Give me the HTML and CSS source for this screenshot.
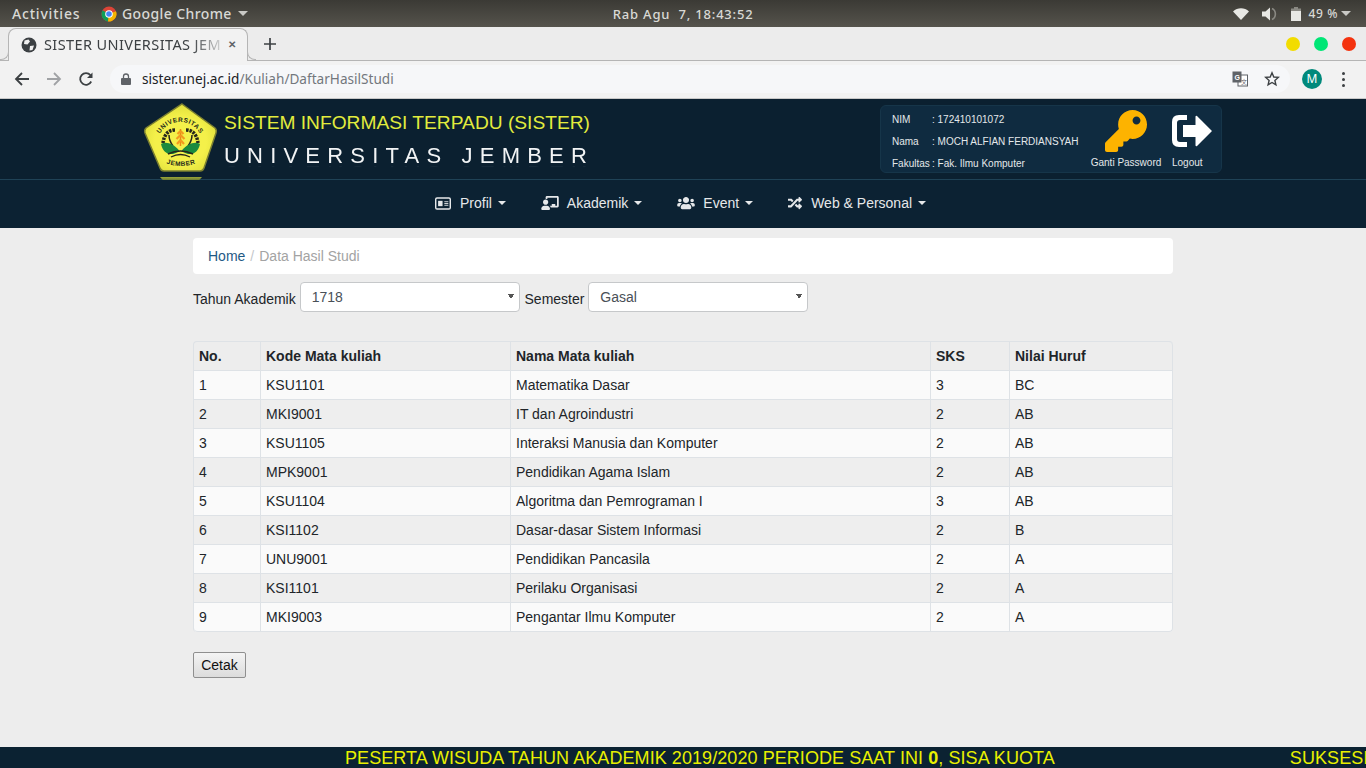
FILE: index.html
```html
<!DOCTYPE html>
<html lang="en">
<head>
  <meta charset="UTF-8">
  <meta name="viewport" content="width=device-width, initial-scale=1.0">
  <title>SISTER Universitas Jember</title>
  <link rel="stylesheet" href="styles.css">
</head>
<body>
  <!-- desktop top bar -->
  <div class="os-bar">
    <span class="os-activities">Activities</span>
    <svg class="os-chrome" viewBox="0 0 16 16" width="16" height="16">
      <circle cx="8" cy="8" r="7.5" fill="#db4437"/>
      <path d="M8 8 L1.5 4.2 A7.5 7.5 0 0 0 7 15.4 Z" fill="#0f9d58"/>
      <path d="M8 8 L15 5.2 A7.5 7.5 0 0 1 7 15.4 Z" fill="#f4b400"/>
      <circle cx="8" cy="8" r="3.8" fill="#fff"/>
      <circle cx="8" cy="8" r="2.8" fill="#4285f4"/>
    </svg>
    <span class="os-app">Google Chrome</span>
    <span class="os-caret"></span>
    <span class="os-clock">Rab Agu &nbsp;7, 18:43:52</span>
    <div class="os-tray">
      <svg viewBox="0 0 16 12" width="16" height="12"><path d="M0 3.5 C4.5 -.8 11.5 -.8 16 3.5 L8 12 Z" fill="#e8e8e4"/></svg>
      <svg viewBox="0 0 16 14" width="16" height="14"><path d="M0 4.5 H3.5 L8 .5 V13.5 L3.5 9.5 H0 Z" fill="#e8e8e4"/><path d="M10 1.5 C14.5 3.5 14.5 10.5 10 12.5" fill="none" stroke="#8a8983" stroke-width="1.6"/></svg>
      <svg viewBox="0 0 10 14" width="10" height="14"><path d="M3 0 H7 V1.5 H10 V14 H0 V1.5 H3 Z" fill="#8a8983"/><rect y="4" width="10" height="10" fill="#e8e8e4"/></svg>
      <span class="os-battery">49 %</span>
      <span class="os-caret"></span>
    </div>
  </div>

  <!-- browser tabs -->
  <div class="tab-strip">
    <div class="tab">
      <svg viewBox="0 0 16 16" width="16" height="16">
        <circle cx="8" cy="8" r="7.5" fill="#3c4043"/>
        <path d="M3.5 3.5 L7.5 2.5 L9 4.5 L6.5 7.5 L3 7 Z M9 9 L13 8.5 L11.5 13 L8.5 13.5 Z" fill="#f1f1f1"/>
      </svg>
      <span class="tab-title">SISTER UNIVERSITAS JEM</span>
      <span class="tab-close">&#x2715;</span>
    </div>
    <svg class="tab-new" viewBox="0 0 12 12" width="12" height="12"><path d="M6 0 V12 M0 6 H12" stroke="#3c4043" stroke-width="1.7"/></svg>
    <div class="win-buttons">
      <span class="win-btn win-yellow"></span>
      <span class="win-btn win-green"></span>
      <span class="win-btn win-red"></span>
    </div>
  </div>

  <!-- browser toolbar -->
  <div class="toolbar">
    <svg class="tool-icon" viewBox="0 0 16 16" width="16" height="16"><path d="M15 8 H2 M8 2 L2 8 L8 14" fill="none" stroke="#3c4043" stroke-width="1.8"/></svg>
    <svg class="tool-icon" viewBox="0 0 16 16" width="16" height="16"><path d="M1 8 H14 M8 2 L14 8 L8 14" fill="none" stroke="#a0a2a5" stroke-width="1.8"/></svg>
    <svg class="tool-icon" viewBox="0 0 16 16" width="16" height="16"><path d="M13.2 10.5 A5.8 5.8 0 1 1 12.4 4.2" fill="none" stroke="#3c4043" stroke-width="1.8"/><path d="M14.5 1.5 V7 H9 Z" fill="#3c4043"/></svg>
    <div class="omnibox">
      <svg viewBox="0 0 10 12" width="10" height="12"><path d="M2.5 5 V3.5 A2.5 2.5 0 0 1 7.5 3.5 V5" fill="none" stroke="#5f6368" stroke-width="1.3"/><rect y="5" width="10" height="7" rx="1" fill="#5f6368"/></svg>
      <span class="url"><b>sister.unej.ac.id</b>/Kuliah/DaftarHasilStudi</span>
      <svg class="omni-translate" viewBox="0 0 16 16" width="16" height="16">
        <rect x="6" y="4" width="9.5" height="11" fill="#fff" stroke="#5f6368"/>
        <rect x=".5" y=".5" width="9" height="11" fill="#5f6368"/>
        <text x="2.5" y="9" class="translate-g">G</text>
        <text x="9" y="13" class="translate-k">&#x6587;</text>
      </svg>
      <svg class="omni-star" viewBox="0 0 16 16" width="16" height="16"><path d="M8 1.8 L9.8 6 L14.3 6.4 L10.9 9.4 L11.9 13.9 L8 11.5 L4.1 13.9 L5.1 9.4 L1.7 6.4 L6.2 6 Z" fill="none" stroke="#3c4043" stroke-width="1.4"/></svg>
    </div>
    <span class="avatar">M</span>
    <span class="menu-dots"><i></i><i></i><i></i></span>
  </div>

  <!-- site header -->
  <header class="banner">
    <svg class="logo" viewBox="0 0 84 90" width="84" height="90">
      <defs>
        <path id="arc-top" d="M17 45 A23 23 0 0 1 63 45"/>
        <path id="arc-bottom" d="M18 60 Q41 72 64 60"/>
        <radialGradient id="logo-fill" cx=".5" cy=".55" r=".6">
          <stop offset=".6" stop-color="#f4f04a"/>
          <stop offset="1" stop-color="#dcdc38"/>
        </radialGradient>
        <linearGradient id="logo-shadow" x1="0" y1="0" x2="0" y2="1">
          <stop offset="0" stop-color="#9aa638"/>
          <stop offset="1" stop-color="#0b2030"/>
        </linearGradient>
      </defs>
      <path d="M42 4 L75 28 Q77 30 76 33 L64 68 Q63 71 60 71 L24 71 Q21 71 20 68 L5 33 Q4 30 6 28 Z" fill="url(#logo-fill)" stroke="#7c8030" stroke-width="1.5"/>
      <text class="logo-text"><textPath href="#arc-top" startOffset="50%" text-anchor="middle">UNIVERSITAS</textPath></text>
      <text class="logo-text"><textPath href="#arc-bottom" startOffset="50%" text-anchor="middle">JEMBER</textPath></text>
      <!-- padi and leaves -->
      <path d="M35 30 C28 30 24 35 23 43" fill="none" stroke="#26261c" stroke-width="3.5" stroke-dasharray="2.5 1"/>
      <path d="M46 30 C53 30 57 35 58 43" fill="none" stroke="#26261c" stroke-width="3.5" stroke-dasharray="2.5 1"/>
      <path d="M29 35 C29 39 30 42 33 46 M52 35 C52 39 51 42 48 46" fill="none" stroke="#26261c" stroke-width="1.5"/>
      <path d="M40.5 29 V46" stroke="#e98a18" stroke-width="1.5"/>
      <path d="M40.5 31 L37.5 34 M40.5 31 L43.5 34 M40.5 35 L36.5 39 M40.5 35 L44.5 39 M40.5 40 L37 44 M40.5 40 L44 44" stroke="#f39a1f" stroke-width="2.2"/>
      <path d="M21 44 C26 41 34 44 39.5 51 C31 57 23 54 21 44 Z M60 44 C55 41 47 44 41.5 51 C50 57 58 54 60 44 Z" fill="#1b8a3e"/>
      <path d="M28 54 Q40.5 48 53 54 M31 57 Q40.5 52 50 57" fill="none" stroke="#26261c" stroke-width="1.4"/>
      <path d="M20 77 H62 L54 86 H28 Z" fill="url(#logo-shadow)"/>
    </svg>
    <div class="brand">
      <div class="brand-title">SISTEM INFORMASI TERPADU (SISTER)</div>
      <div class="brand-name">UNIVERSITAS JEMBER</div>
    </div>
    <div class="user-box">
      <div class="user-info">
        <div class="user-row"><span class="user-label">NIM</span><span>: 172410101072</span></div>
        <div class="user-row"><span class="user-label">Nama</span><span>: MOCH ALFIAN FERDIANSYAH</span></div>
        <div class="user-row"><span class="user-label">Fakultas</span><span>: Fak. Ilmu Komputer</span></div>
      </div>
      <a class="user-action action-key">
        <svg viewBox="0 0 512 512" width="42" height="42"><path fill="#fdb300" d="M512 176.001C512 273.203 433.202 352 336 352c-11.22 0-22.19-1.062-32.827-3.069l-24.012 27.014A23.999 23.999 0 0 1 261.223 384H224v40c0 13.255-10.745 24-24 24h-40v40c0 13.255-10.745 24-24 24H24c-13.255 0-24-10.745-24-24v-78.059c0-6.365 2.529-12.47 7.029-16.971l161.802-161.802C163.108 213.814 160 195.271 160 176 160 78.798 238.797.001 335.999 0 433.488-.001 512 78.511 512 176.001zM336 128c0 26.51 21.49 48 48 48s48-21.49 48-48-21.49-48-48-48-48 21.49-48 48z"/></svg>
        <span>Ganti Password</span>
      </a>
      <a class="user-action action-out">
        <svg viewBox="0 0 40 32" width="40" height="32"><path fill="#fff" d="M40 16 L25 1 Q23.5 0 23.5 2 V10 H11 V22 H23.5 V30 Q23.5 32 25 31 Z M15 0 H7 Q0 0 0 7 V25 Q0 32 7 32 H15 V27 H8 Q5 27 5 24 V8 Q5 5 8 5 H15 Z"/></svg>
        <span>Logout</span>
      </a>
    </div>
  </header>

  <nav class="main-nav">
    <a class="nav-item">
      <svg class="icon-card" viewBox="0 0 18 14" width="16" height="13"><rect x=".8" y=".8" width="16.4" height="12.4" rx="1.5" fill="none" stroke="#e6e8ea" stroke-width="1.6"/><rect x="3.5" y="4" width="5" height="6" fill="#e6e8ea"/><path d="M10.5 5 H15 M10.5 7 H15 M10.5 9 H15" stroke="#e6e8ea"/></svg>
      <span class="nav-label">Profil</span><span class="nav-caret"></span>
    </a>
    <a class="nav-item">
      <svg viewBox="0 0 640 512" width="18" height="14"><path fill="#e6e8ea" d="M208 352c-2.39 0-4.78.35-7.06 1.09C187.98 357.3 174.35 360 160 360c-14.35 0-27.98-2.7-40.95-6.91-2.28-.74-4.66-1.09-7.05-1.09C49.94 352-.33 402.48 0 464.62.14 490.88 21.73 512 48 512h224c26.27 0 47.86-21.12 48-47.38.33-62.14-49.94-112.62-112-112.62zm-48-32c53.02 0 96-42.98 96-96s-42.98-96-96-96-96 42.98-96 96 42.98 96 96 96zM592 0H208c-26.47 0-48 22.25-48 49.59V96c23.42 0 45.1 6.78 64 17.8V64h352v288h-64v-64H384v64h-76.24c19.1 16.69 33.12 38.73 39.69 64H592c26.47 0 48-22.25 48-49.59V49.59C640 22.25 618.47 0 592 0z"/></svg>
      <span class="nav-label">Akademik</span><span class="nav-caret"></span>
    </a>
    <a class="nav-item">
      <svg viewBox="0 0 640 512" width="18" height="14"><path fill="#e6e8ea" d="M96 224c35.3 0 64-28.7 64-64s-28.7-64-64-64-64 28.7-64 64 28.7 64 64 64zm448 0c35.3 0 64-28.7 64-64s-28.7-64-64-64-64 28.7-64 64 28.7 64 64 64zm32 32h-64c-17.6 0-33.5 7.1-45.1 18.6 40.3 22.1 68.9 62 75.1 109.4h66c17.7 0 32-14.3 32-32v-32c0-35.3-28.7-64-64-64zm-256 0c61.9 0 112-50.1 112-112S381.9 32 320 32 208 82.1 208 144s50.1 112 112 112zm76.8 32h-8.3c-20.8 10-43.9 16-68.5 16s-47.6-6-68.5-16h-8.3C179.6 288 128 339.6 128 403.2V432c0 26.5 21.5 48 48 48h288c26.5 0 48-21.5 48-48v-28.8c0-63.6-51.6-115.2-115.2-115.2zm-223.7-13.4C161.5 263.1 145.6 256 128 256H64c-35.3 0-64 28.7-64 64v32c0 17.7 14.3 32 32 32h65.9c6.3-47.4 34.9-87.3 75.2-109.4z"/></svg>
      <span class="nav-label">Event</span><span class="nav-caret"></span>
    </a>
    <a class="nav-item">
      <svg viewBox="0 0 512 512" width="16" height="14"><path fill="#e6e8ea" d="M504.971 359.029c9.373 9.373 9.373 24.569 0 33.941l-80 79.984c-15.01 15.01-40.971 4.49-40.971-16.971V416h-58.785a12.004 12.004 0 0 1-8.773-3.812l-70.556-75.596 53.333-57.143L352 336h32v-39.981c0-21.438 25.943-31.998 40.971-16.971l80 79.981zM12 176h84l52.781 56.551 53.333-57.143-70.556-75.596A11.999 11.999 0 0 0 122.785 96H12c-6.627 0-12 5.373-12 12v56c0 6.627 5.373 12 12 12zm372 0v39.984c0 21.46 25.961 31.98 40.971 16.971l80-79.984c9.373-9.373 9.373-24.569 0-33.941l-80-79.981C409.943 24.021 384 34.582 384 56.019V96h-58.785a12.004 12.004 0 0 0-8.773 3.812L96 336H12c-6.627 0-12 5.373-12 12v56c0 6.627 5.373 12 12 12h110.785c3.326 0 6.503-1.381 8.773-3.812L352 176h32z"/></svg>
      <span class="nav-label">Web &amp; Personal</span><span class="nav-caret"></span>
    </a>
  </nav>

  <main class="content">
    <div class="breadcrumb"><a class="crumb-link">Home</a><span class="crumb-sep">/</span><span class="crumb-now">Data Hasil Studi</span></div>
    <form class="filter">
      Tahun Akademik
      <select class="filter-select"><option>1718</option></select>
      Semester
      <select class="filter-select"><option>Gasal</option></select>
    </form>
    <table class="grades">
      <colgroup>
        <col class="col-no"><col class="col-code"><col class="col-name"><col class="col-sks"><col>
      </colgroup>
      <thead>
        <tr><th>No.</th><th>Kode Mata kuliah</th><th>Nama Mata kuliah</th><th>SKS</th><th>Nilai Huruf</th></tr>
      </thead>
      <tbody>
        <tr><td>1</td><td>KSU1101</td><td>Matematika Dasar</td><td>3</td><td>BC</td></tr>
        <tr><td>2</td><td>MKI9001</td><td>IT dan Agroindustri</td><td>2</td><td>AB</td></tr>
        <tr><td>3</td><td>KSU1105</td><td>Interaksi Manusia dan Komputer</td><td>2</td><td>AB</td></tr>
        <tr><td>4</td><td>MPK9001</td><td>Pendidikan Agama Islam</td><td>2</td><td>AB</td></tr>
        <tr><td>5</td><td>KSU1104</td><td>Algoritma dan Pemrograman I</td><td>3</td><td>AB</td></tr>
        <tr><td>6</td><td>KSI1102</td><td>Dasar-dasar Sistem Informasi</td><td>2</td><td>B</td></tr>
        <tr><td>7</td><td>UNU9001</td><td>Pendidikan Pancasila</td><td>2</td><td>A</td></tr>
        <tr><td>8</td><td>KSI1101</td><td>Perilaku Organisasi</td><td>2</td><td>A</td></tr>
        <tr><td>9</td><td>MKI9003</td><td>Pengantar Ilmu Komputer</td><td>2</td><td>A</td></tr>
      </tbody>
    </table>
    <button class="print-btn" type="button">Cetak</button>
  </main>

  <footer class="ticker">
    <span>PESERTA WISUDA TAHUN AKADEMIK 2019/2020 PERIODE SAAT INI <b>0</b>, SISA KUOTA</span>
    <span>SUKSESI</span>
  </footer>
</body>
</html>
```

FILE: styles.css
```css
html, body {
  margin: 0;
  padding: 0;
  height: 100%;
}
body {
  width: 1366px;
  height: 768px;
  overflow: hidden;
  display: flex;
  flex-direction: column;
  font-family: "Liberation Sans", Arial, sans-serif;
  font-size: 14px;
  color: #212529;
  background: #ededed;
}

/* desktop bar */
.os-bar {
  height: 27px;
  flex: none;
  display: flex;
  align-items: center;
  padding: 0 0 0 12px;
  background: linear-gradient(#3b3a35, #55534c);
  color: #d9d9d5;
  font-family: "Noto Sans", sans-serif;
  font-size: 14px;
  font-weight: 500;
  letter-spacing: .4px;
}
.os-activities {
  width: 89px;
  letter-spacing: .8px;
}
.os-chrome { margin-right: 5px; }
.os-app { margin-right: 6px; }
.os-caret {
  width: 0;
  height: 0;
  border-left: 5px solid transparent;
  border-right: 5px solid transparent;
  border-top: 5px solid #c9c9c5;
}
.os-clock {
  margin-left: 365px;
  font-size: 13px;
  letter-spacing: .8px;
}
.os-tray {
  margin-left: auto;
  margin-right: 15px;
  display: flex;
  align-items: center;
  gap: 13px;
}
.os-battery {
  font-size: 12px;
  letter-spacing: .6px;
  margin-left: -5px;
  margin-right: -10px;
}

/* browser chrome */
.tab-strip {
  height: 34px;
  flex: none;
  display: flex;
  align-items: flex-end;
  background: #ececec;
  box-sizing: border-box;
  padding-left: 8px;
  border-bottom: 1px solid #b5b5b5;
}
.tab {
  position: relative;
  width: 240px;
  height: 33px;
  box-sizing: border-box;
  margin-bottom: -1px;
  display: flex;
  align-items: center;
  padding: 0 11px 0 12px;
  background: #f2f2f2;
  border: 1px solid #b5b5b5;
  border-bottom: 0;
  border-radius: 8px 8px 0 0;
  font-family: "Noto Sans", sans-serif;
  font-size: 14.5px;
  letter-spacing: .4px;
  color: #3c4043;
}
/* flared bottom corners of the active tab */
.tab::before, .tab::after {
  content: "";
  position: absolute;
  bottom: 1px;
  width: 8px;
  height: 8px;
  background: #ececec;
  border-bottom: 1px solid #b5b5b5;
}
.tab::before {
  left: -9px;
  border-right: 1px solid #b5b5b5;
  border-bottom-right-radius: 8px;
}
.tab::after {
  right: -9px;
  border-left: 1px solid #b5b5b5;
  border-bottom-left-radius: 8px;
}
.tab-title {
  margin-left: 7px;
  margin-top: -3px;
  width: 176px;
  white-space: nowrap;
  -webkit-mask-image: linear-gradient(90deg, #000 84%, rgba(0, 0, 0, .2));
  mask-image: linear-gradient(90deg, #000 84%, rgba(0, 0, 0, .2));
}
.tab-close {
  margin-left: auto;
  margin-top: -2px;
  font-size: 10px;
  font-weight: 700;
  color: #5f6368;
}
.tab-new {
  align-self: center;
  margin-left: 16px;
}
.win-buttons {
  margin-left: auto;
  margin-right: 10px;
  align-self: center;
  display: flex;
  gap: 14px;
}
.win-btn {
  width: 14px;
  height: 14px;
  border-radius: 50%;
}
.win-yellow { background: #f2dc00; }
.win-green { background: #00e676; }
.win-red { background: #f4330f; }

.toolbar {
  height: 36px;
  padding-bottom: 1px;
  flex: none;
  display: flex;
  align-items: center;
  padding-left: 14px;
  background: #f2f2f2;
  border-bottom: 1px solid #c8c8c8;
}
.tool-icon { margin-right: 16px; }
.omnibox {
  width: 1180px;
  height: 28px;
  box-sizing: border-box;
  display: flex;
  align-items: center;
  padding: 0 10px 0 11px;
  background: #f6f7f9;
  border-radius: 14px;
}
.url {
  margin-left: 11px;
  margin-top: -1px;
  font-family: "Noto Sans", sans-serif;
  font-size: 13.6px;
  color: #73777d;
}
.url b {
  font-weight: 400;
  color: #202124;
}
.omni-translate { margin-left: auto; }
.omni-star { margin-left: 16px; }
.translate-g {
  font-size: 7px;
  font-weight: 700;
  fill: #fff;
}
.translate-k {
  font-family: "Noto Sans CJK SC", sans-serif;
  font-size: 6px;
  fill: #5f6368;
}
.avatar {
  width: 20px;
  height: 20px;
  margin-left: 12px;
  border-radius: 50%;
  background: #00897b;
  color: #fff;
  font-family: "Noto Sans", sans-serif;
  font-size: 12px;
  line-height: 20px;
  text-align: center;
}
.menu-dots {
  margin-left: 20px;
  display: flex;
  flex-direction: column;
  gap: 3px;
}
.menu-dots i {
  width: 3px;
  height: 3px;
  border-radius: 50%;
  background: #3c4043;
}

/* site header */
.banner {
  height: 80px;
  flex: none;
  display: flex;
  align-items: flex-start;
  padding-left: 140px;
  background: #0b2030;
  border-bottom: 1px solid #1f4256;
}
.logo { flex: none; margin-top: 1px; }
.logo-text {
  font-size: 6.5px;
  font-weight: 700;
  fill: #1d2a1a;
  letter-spacing: .5px;
}
.brand { width: 370px; }
.brand-title {
  margin-top: 13px;
  font-size: 19.2px;
  line-height: 22px;
  color: #e2ec3d;
  white-space: nowrap;
}
.brand-name {
  margin-top: 10px;
  font-size: 22px;
  line-height: 24px;
  letter-spacing: 7.2px;
  color: #f2f4f5;
  white-space: nowrap;
  -webkit-box-reflect: below -7px linear-gradient(transparent 72%, rgba(255, 255, 255, .25));
}
.user-box {
  width: 342px;
  height: 68px;
  box-sizing: border-box;
  margin: 6px 0 0 286px;
  display: flex;
  padding: 0 0 0 11px;
  background: #0f2b40;
  border: 1px solid #163549;
  border-radius: 6px;
  color: #e4e8ea;
  font-size: 10px;
}
.user-info {
  width: 198px;
  flex: none;
  padding-top: 2px;
}
.user-row {
  height: 22px;
  display: flex;
  align-items: center;
  white-space: nowrap;
}
.user-label { width: 40px; }
.user-action {
  display: flex;
  flex-direction: column;
  white-space: nowrap;
}
.action-key {
  width: 72px;
  align-items: center;
  padding-top: 4px;
}
.action-key span { margin-top: 5px; }
.action-out {
  margin-left: 10px;
  padding-top: 9px;
}
.action-out span { margin-top: 10px; }

.main-nav {
  height: 46px;
  padding: 0 4px 2px 0;
  flex: none;
  display: flex;
  justify-content: center;
  align-items: center;
  gap: 35px;
  background: #0c2233;
  color: #e6e8ea;
}
.nav-item {
  display: flex;
  align-items: center;
}
.nav-item:last-child { margin-left: -1px; }
.icon-card {
  margin-left: -1px;
  margin-right: 1px;
}
.nav-label { margin-left: 8px; }
.nav-caret {
  margin-left: 6px;
  width: 0;
  height: 0;
  border-left: 4px solid transparent;
  border-right: 4px solid transparent;
  border-top: 4px solid #e6e8ea;
}

/* page */
.content {
  flex: 1;
  width: 980px;
  margin: 0 auto;
  padding-top: 10px;
}
.breadcrumb {
  height: 36px;
  box-sizing: border-box;
  padding: 0 15px;
  display: flex;
  align-items: center;
  background: #fff;
  border-radius: 4px;
}
.crumb-link { color: #1f5a85; }
.crumb-sep {
  margin: 0 5px;
  color: #c4c8cb;
}
.crumb-now { color: #a3a3a3; }
.filter {
  margin-top: 8px;
  line-height: 34px;
  height: 30px;
}
.filter-select {
  width: 220px;
  height: 30px;
  margin-right: 1px;
  padding: 0 8px 0 11px;
  vertical-align: top;
  appearance: none;
  border: 1px solid #c6c8ca;
  border-radius: 4px;
  /* small native-looking arrow */
  background-color: #fff;
  background-image: linear-gradient(to top right, transparent 50%, #555 50%), linear-gradient(to top left, transparent 50%, #555 50%);
  background-size: 3px 5px, 3px 5px;
  background-position: 207px 11px, 210px 11px;
  background-repeat: no-repeat;
  color: #495057;
  font-family: "Liberation Sans", Arial, sans-serif;
  font-size: 14px;
}
.grades {
  width: 980px;
  margin-top: 29px;
  table-layout: fixed;
  border-collapse: separate;
  border-spacing: 0;
  border-top: 1px solid #dee2e6;
  border-left: 1px solid #dee2e6;
  border-radius: 4px;
}
.col-no { width: 67px; }
.col-code { width: 250px; }
.col-name { width: 420px; }
.col-sks { width: 79px; }
.grades th, .grades td {
  height: 29px;
  box-sizing: border-box;
  padding: 0 5px;
  text-align: left;
  border-right: 1px solid #dee2e6;
  border-bottom: 1px solid #dee2e6;
}
.grades tbody tr:nth-child(odd) { background: #fafafa; }
.grades tbody tr:nth-child(even) { background: #eeeeee; }
.grades th:last-child { border-top-right-radius: 4px; }
.grades tbody tr:last-child td:first-child { border-bottom-left-radius: 4px; }
.grades tbody tr:last-child td:last-child { border-bottom-right-radius: 4px; }
.print-btn {
  display: block;
  width: 53px;
  height: 26px;
  margin-top: 20px;
  padding: 0;
  border: 1px solid #8f8f8f;
  border-radius: 2px;
  background: linear-gradient(#f4f4f4, #dcdcdc);
  color: #111;
  font-family: "Liberation Sans", Arial, sans-serif;
  font-size: 14px;
}

.ticker {
  height: 21px;
  flex: none;
  display: flex;
  gap: 235px;
  padding-left: 345px;
  box-sizing: border-box;
  overflow: hidden;
  white-space: nowrap;
  background: #0b2232;
  color: #e8f000;
  font-size: 18px;
  letter-spacing: .07px;
  line-height: 22px;
}
```
